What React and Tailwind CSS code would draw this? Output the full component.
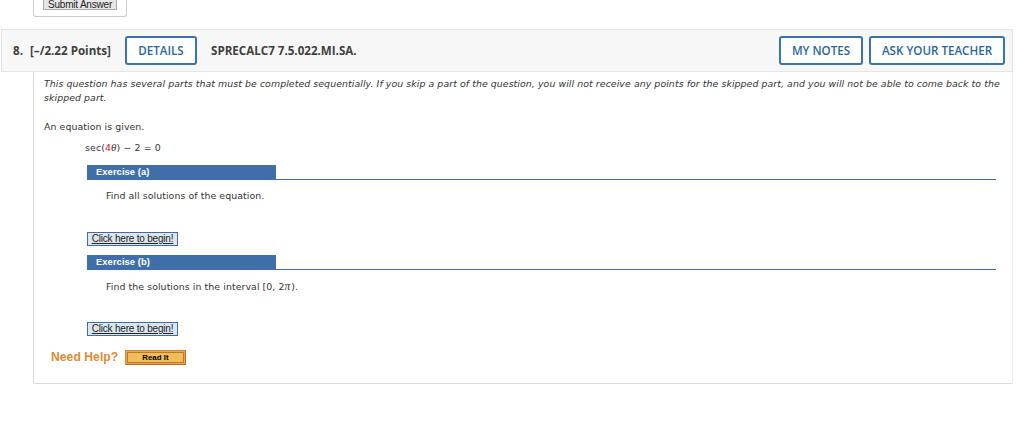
import React from "react";

const EXERCISES = [
  { id: "a", prompt: "Find all solutions of the equation." },
  {
    id: "b",
    prompt: (
      <>
        Find the solutions in the interval [0, 2
        <i className="mr-px font-['Liberation_Serif',serif] text-[11.5px]">π</i>).
      </>
    ),
  },
];

function HeaderButton({ className, children }) {
  return (
    <button
      className={`h-[29px] shrink-0 rounded-[3px] border-2 border-[#3b72a8] bg-white text-center text-[11.6px] leading-[25px] font-semibold whitespace-nowrap text-[#29659f] ${className}`}
    >
      {children}
    </button>
  );
}

function Exercise({ id, prompt }) {
  return (
    <section className="h-[90px]">
      <div className="h-[15px] border-b border-[#406ca5]">
        <h3 className="h-[15px] w-[189px] bg-[#406ea8] pl-[9px] font-['Liberation_Sans',Arial,sans-serif] text-[9.4px] leading-[14px] font-bold text-white">
          Exercise ({id})
        </h3>
      </div>
      <p className="mt-[9px] h-[14px] pl-[19px] leading-[14px]">{prompt}</p>
      <button className="mt-[29px] block h-[14px] w-[91px] border border-[#406ca0] bg-[#dbe6ef] text-center font-['Liberation_Sans',Arial,sans-serif] text-[10px] leading-[12px] tracking-[-0.2px] whitespace-nowrap text-[#222] underline">
        Click here to begin!
      </button>
    </section>
  );
}

export default function App() {
  return (
    <div className="h-[422px] w-[1024px] overflow-hidden bg-white font-['DejaVu_Sans',Verdana,sans-serif] text-[9.4px] text-[#333]">
      <div className="ml-[33px] h-[17px] w-[94px] rounded-b-[3px] border border-t-0 border-[#ccc] pl-[9px]">
        <button className="block h-[10px] w-[74px] border border-t-0 border-[#aaa] bg-[#e7e7e7] font-['Liberation_Sans',Arial,sans-serif] text-[10px] leading-[4px] tracking-[-0.2px] whitespace-nowrap text-[#222]">
          Submit Answer
        </button>
      </div>

      {/* Question header */}
      <header className="mt-[12px] ml-px flex h-[43px] w-[1012px] items-center border border-[#e4e4e4] bg-[#f7f7f7] pl-[11px] font-['Open_Sans',sans-serif] text-[11.6px] font-bold text-[#404040]">
        <span className="w-[17px]">8.</span>
        <span className="w-[95px] whitespace-nowrap">[–/2.22 Points]</span>
        <HeaderButton className="w-[72px]">DETAILS</HeaderButton>
        <span className="ml-[14px] whitespace-nowrap">SPRECALC7 7.5.022.MI.SA.</span>
        <div className="mr-[7px] ml-auto flex gap-[6px]">
          <HeaderButton className="w-[84px]">MY NOTES</HeaderButton>
          <HeaderButton className="w-[136px]">ASK YOUR TEACHER</HeaderButton>
        </div>
      </header>

      {/* Question body */}
      <main className="ml-[33px] h-[312px] w-[980px] rounded-b-[2px] border border-t-0 border-[#d8d8d8] border-r-[#eee] pt-[5px] tracking-[0.07px]">
        <div className="pl-[10px]">
          <p className="leading-[14px] whitespace-nowrap italic">
            This question has several parts that must be completed sequentially. If you skip a part of the question, you
            will not receive any points for the skipped part, and you will not be able to come back to the
            <br />
            skipped part.
          </p>
          <p className="mt-[15px] leading-[14px]">An equation is given.</p>
          <p className="mt-[6px] h-[14px] pl-[41px] leading-[14px] tracking-[0.12px]">
            sec(<span className="text-[#e02020]">4</span>
            <i className="font-['Liberation_Serif',serif] text-[11px]">θ</i>) − 2 = 0
          </p>
        </div>

        <div className="mt-[11px] ml-[53px] w-[909px]">
          {EXERCISES.map((ex) => (
            <Exercise key={ex.id} {...ex} />
          ))}
        </div>

        <div className="mt-[5px] flex pl-[17px] font-['Liberation_Sans',Arial,sans-serif] font-bold">
          <span className="w-[74px] text-[12.1px] leading-[14px] whitespace-nowrap text-[#df8a32]">Need Help?</span>
          <button className="h-[15px] w-[61px] border border-[#d58a3c] border-r-[#b96c20] border-b-[#b96c20] bg-[#e9a353] p-px">
            <span className="block h-[11px] border border-[#b97a30] bg-[#f2bd59] text-center text-[7.8px] leading-[10px] text-black">
              Read It
            </span>
          </button>
        </div>
      </main>
    </div>
  );
}
